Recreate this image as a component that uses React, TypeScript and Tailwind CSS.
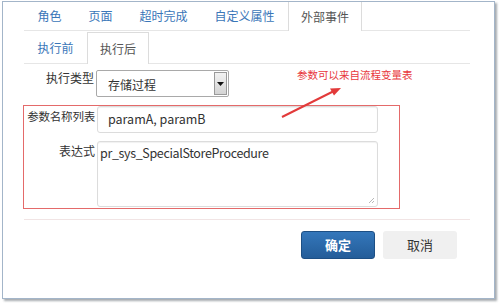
import React from 'react';

const font = { fontFamily: '"Noto Sans CJK SC", "Noto Sans", sans-serif' };

const topTabs = ['角色', '页面', '超时完成', '自定义属性', '外部事件'];
const subTabs = ['执行前', '执行后'];

const Tab = (props: { label: string; active?: boolean; top?: boolean }) => {
  const { label, active, top } = props;
  if (active) {
    return (
      <div
        className={`flex items-center px-[12px] text-[12px] text-[#555] bg-white border-l border-r border-[#dcdcdc] -mb-[1px] ${top ? '' : 'border-t'}`}
      >
        {label}
      </div>
    );
  }
  return <div className="flex items-center px-[13.5px] text-[12px] text-[#3a76b8]">{label}</div>;
};

const App = () => {
  return (
    <div className="w-[499px] h-[304px] bg-white relative overflow-hidden" style={font}>
      <div className="ml-[2px] mt-[1px] w-[493px] h-[298px] border border-[#a3b5c9] bg-white shadow-[2px_2px_2px_rgba(60,70,80,0.45)]">
        <div className="ml-[21px] w-[446px]">
          {/* top tabs */}
          <div className="flex h-[29px] border-b border-[#e6e6e6]">
            {topTabs.map((t, i) => (
              <Tab key={t} label={t} active={i === topTabs.length - 1} top />
            ))}
          </div>
          {/* sub tabs */}
          <div className="flex h-[33px] pt-[1px] border-b border-[#e6e6e6]">
            {subTabs.map((t, i) => (
              <Tab key={t} label={t} active={i === 1} />
            ))}
          </div>

          {/* 执行类型 */}
          <div className="flex mt-[6px]">
            <div className="w-[70px] pt-[1px] text-right text-[12px] text-[#333] leading-[14px]">执行类型</div>
            <div className="ml-[2px] w-[133px] h-[27px] border border-[#a9a9a9] rounded-[2px] flex items-center bg-white">
              <span className="flex-1 pl-[11px] pt-[2px] text-[12px] text-[#333]">存储过程</span>
              <span className="w-[13px] h-[23px] mr-[1px] border border-[#9a9a9a] bg-gradient-to-b from-[#f2f2f2] to-[#d4d4d4] flex items-center justify-center">
                <svg width="7" height="4" viewBox="0 0 7 4">
                  <path d="M0 0H7L3.5 4Z" fill="#111" />
                </svg>
              </span>
            </div>
          </div>

          {/* red box */}
          <div className="-ml-[1px] mt-[8px] w-[377px] h-[104px] border border-[#e46a6a] pb-[2px]">
            <div className="flex">
              <div className="w-[71px] pt-[3px] text-right text-[11.5px] text-[#333] leading-[14px] tracking-[-0.2px]">
                参数名称列表
              </div>
              <div className="ml-[2px] w-[281px] h-[27px] border border-[#dcdcdc] rounded-[3px] shadow-[inset_0_1px_1px_rgba(0,0,0,0.06)] flex items-center pl-[10px] text-[12.5px] text-[#333]">
                paramA, paramB
              </div>
            </div>
            <div className="flex mt-[8px]">
              <div className="w-[71px] pt-[3px] text-right text-[12px] text-[#333] leading-[14px]">表达式</div>
              <div className="ml-[2px] w-[281px] h-[66px] border border-[#dcdcdc] rounded-[3px] shadow-[inset_0_1px_1px_rgba(0,0,0,0.06)] relative pl-[2px] pt-[2px] text-[12.5px] tracking-[-0.35px] text-[#333] leading-[18px]">
                pr_sys_SpecialStoreProcedure
                <svg className="absolute right-[2px] bottom-[2px]" width="7" height="7" viewBox="0 0 7 7">
                  <path d="M6 1L1 6M6 4L4 6" stroke="#b8b8b8" strokeWidth="1" />
                </svg>
              </div>
            </div>
          </div>

          {/* separator */}
          <div className="mt-[10px] border-t border-[#f1e4e4]" />

          {/* buttons */}
          <div className="flex justify-end gap-[8px] mt-[11px] pr-[13px]">
            <button className="w-[74px] h-[28px] rounded-[3px] border border-[#1d4f84] bg-gradient-to-b from-[#3477bb] to-[#245d99] text-white text-[13px] font-bold">
              确定
            </button>
            <button className="w-[74px] h-[28px] rounded-[3px] bg-[#f0f0f0] text-[#333] text-[13px]">取消</button>
          </div>
        </div>
      </div>

      {/* annotation */}
      <div className="absolute left-[297px] top-[68px] text-[10.5px] text-[#e8383d] leading-[14px]">
        参数可以来自流程变量表
      </div>
      <svg className="absolute left-0 top-0" width="499" height="304" viewBox="0 0 499 304" style={{ pointerEvents: 'none' }}>
        <path d="M282 117L334 91" stroke="#e23a3a" strokeWidth="2" />
        <path d="M341 88L330 88.5L334 95.5Z" fill="#e23a3a" />
      </svg>
    </div>
  );
};

export default App;
